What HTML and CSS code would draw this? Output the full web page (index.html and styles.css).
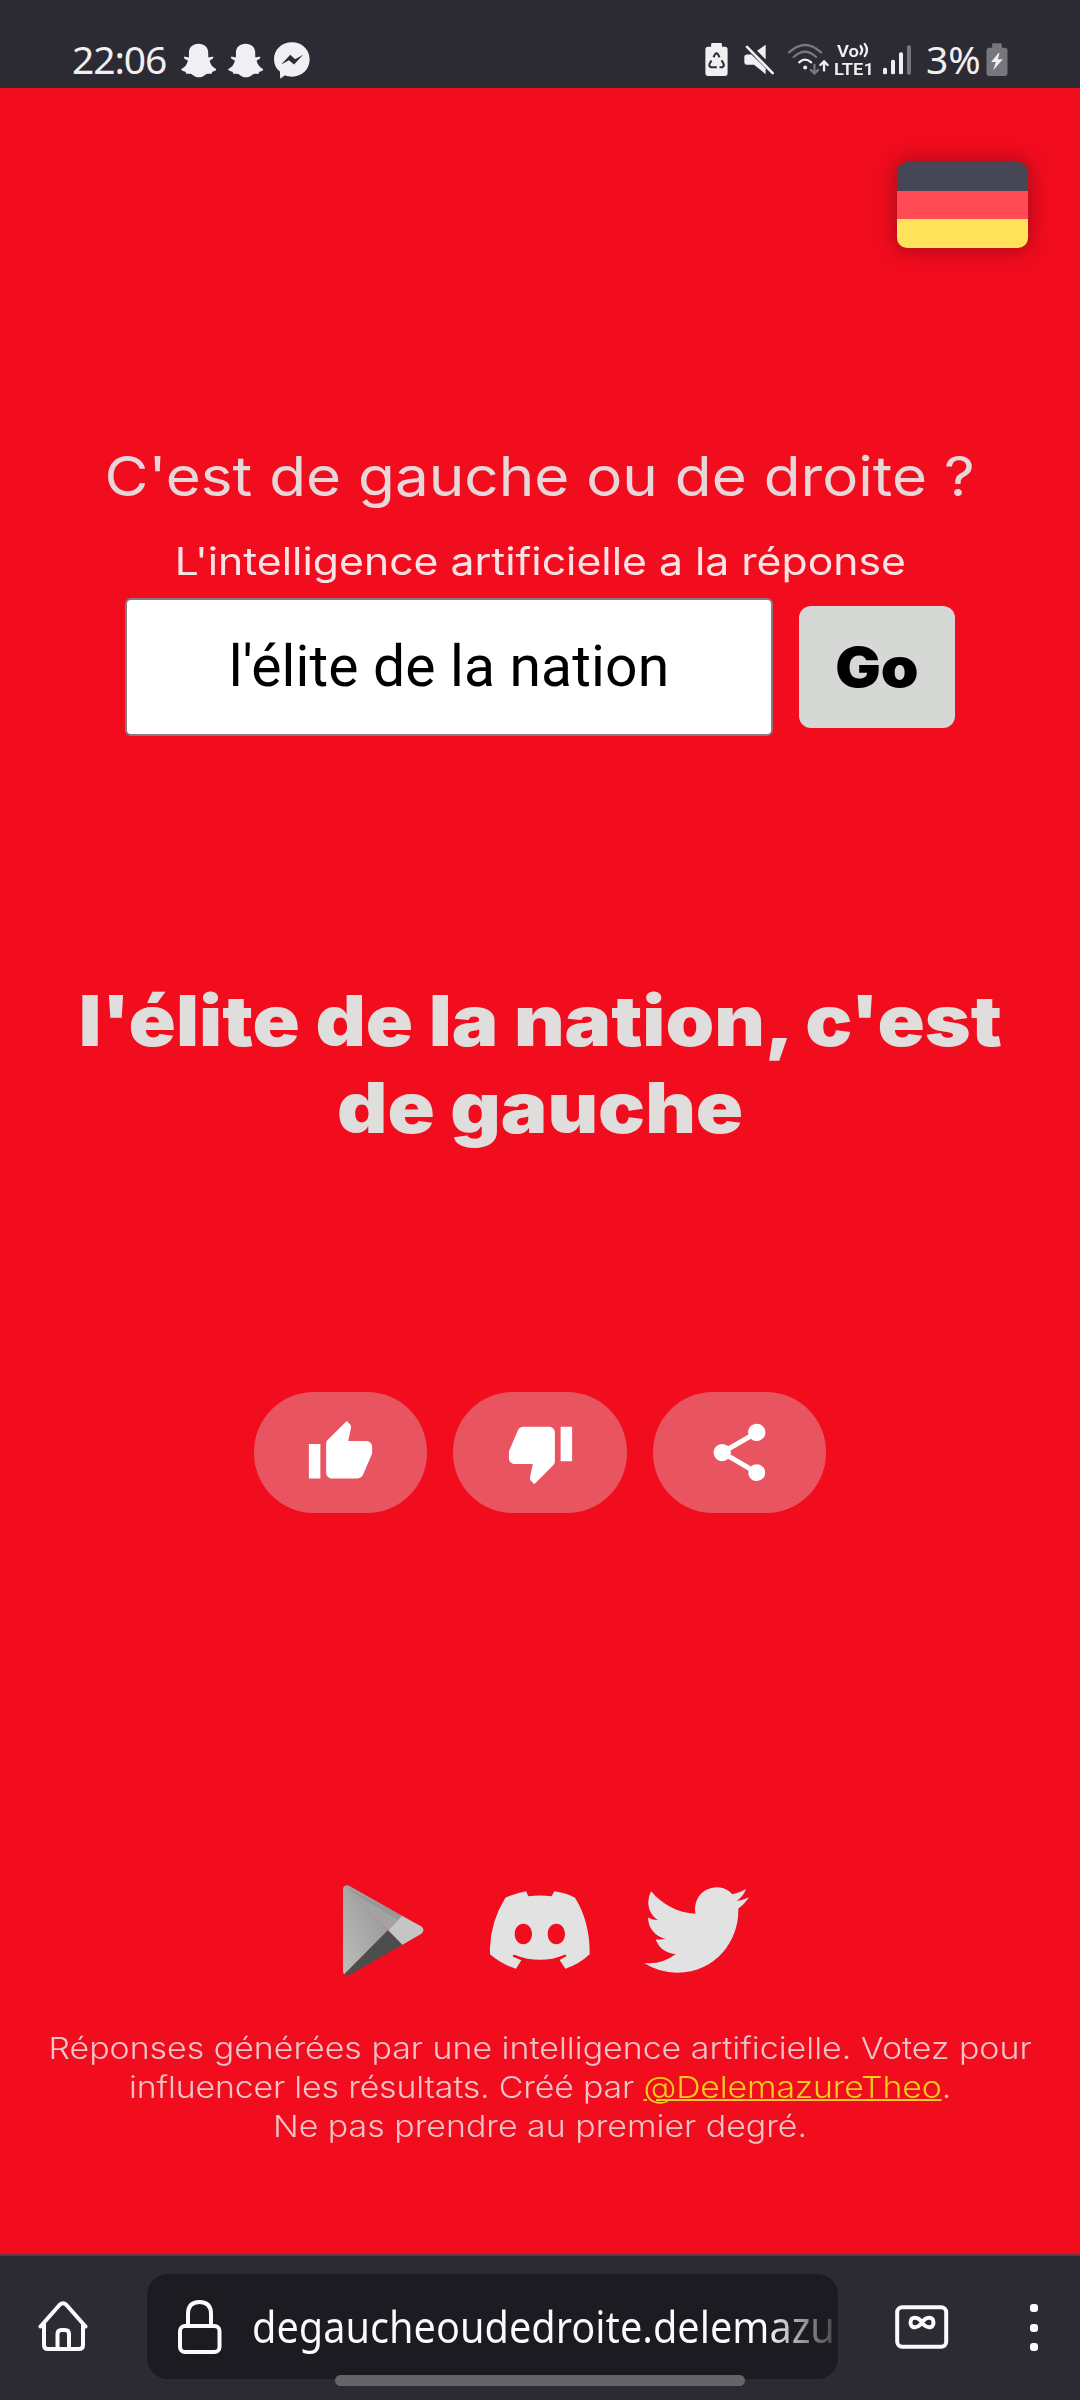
FILE: index.html
```html
<!DOCTYPE html>
<html lang="fr">
<head>
<meta charset="utf-8">
<title>C'est de gauche ou de droite ?</title>
<link rel="stylesheet" href="styles.css">
</head>
<body>
<svg class="defs" aria-hidden="true">
  <symbol id="ghost" viewBox="525 130 103 106" preserveAspectRatio="none">
    <path d="M576 132c-17 0-28 11-28 27v14c-5 1-11-3-14-1-3 3 3 8 11 11-2 12-9 21-19 26-2 3 3 6 12 8l3 7c7-1 13-1 18 3 6 4 11 7 18 7s12-3 18-7c5-4 11-4 18-3l3-7c8-2 13-5 11-8-10-5-17-14-19-26 8-3 13-8 10-11-3-2-8 2-14 1v-14c0-16-11-27-28-27z"/>
  </symbol>
</svg>
<header class="status">
  <div class="status-left">
    <span class="clock">22:06</span>
    <svg class="ghost"><use href="#ghost"/></svg>
    <svg class="ghost"><use href="#ghost"/></svg>
    <svg class="messenger" viewBox="796 128 104 110" preserveAspectRatio="none"><path fill-rule="evenodd" d="M848 129c29 0 51 22 51 51s-22 51-51 51c-8 0-14-1-20-4l-14 10-1-21c-11-9-17-22-17-37 0-28 22-50 52-50zM817 195l26-29 14 13 23-13-26 29-15-13z"/></svg>
  </div>
  <div class="status-right">
    <svg class="saver" viewBox="77 130 68 98"><path d="M98 130h26q3 0 3 4v7h9q8 0 8 8v71q0 8-8 8H86q-8 0-8-8v-71q0-8 8-8h9v-7q0-4 3-4z"/><path class="ink" d="M102 172l5-9q4-5 8 0l5 9M126 181l6 11q3 7-4 10h-8M112 202H96q-8-2-6-9l6-11M103 202h-8"/></svg>
    <svg class="mute" viewBox="194 132 90 92"><path d="M259 134v44l-26-26zM196 166l6-3h14l43 42v17l-35-28h-22q-6 0-7-7v-16q0-4 1-6z"/><path d="M203 140l77 79" fill="none" stroke="#f0f0f2" stroke-width="8" stroke-linecap="round"/></svg>
    <svg class="wifi" viewBox="326 130 124 96" fill="none" stroke-width="7" stroke-linecap="round"><path class="dim" d="M329 158q49-45 97 0M343 172q35-32 68 0M406 196v26m-11-11l11 11 11-11"/><path class="lit" d="M360 188q17-16 36 0M435 213v-27m-11 10l11-11 11 11"/><circle cx="378" cy="204" r="6" fill="#f0f0f2"/></svg>
    <div class="lte"><span>Vo<svg viewBox="0 0 11 16" width="11" height="16"><path d="M1 4q3 4 0 8M5 2q4 6 0 12" fill="none" stroke="#f0f0f2" stroke-width="2.200" stroke-linecap="round"/></svg></span><span>LTE1</span></div>
    <svg class="signal" viewBox="609 134 84 90"><rect x="609" y="202" width="12" height="20" rx="5"/><rect x="633" y="178" width="12" height="44" rx="5"/><rect x="657" y="156" width="12" height="66" rx="5"/><rect class="dimfill" x="681" y="135" width="12" height="88" rx="5"/></svg>
    <span class="percent">3%</span>
    <svg class="battery" viewBox="920 129 65 99"><path class="dimfill" d="M939 130h24q4 0 4 4v9h9q8 0 8 8v69q0 8-8 8h-47q-8 0-8-8v-69q0-8 8-8h9v-9q0-4 1-4z"/><path d="M957 159l-22 27h14l-8 25 29-33h-15l5-19z"/></svg>
  </div>
</header>

<main class="page">
  <a class="flag" aria-label="Deutsch"><i class="black"></i><i class="red"></i><i class="gold"></i></a>
  <h1 class="title">C'est de gauche ou de droite ?</h1>
  <p class="subtitle">L'intelligence artificielle a la réponse</p>
  <form class="ask">
    <div class="field">l'élite de la nation</div>
    <button class="go" type="button"><span>Go</span></button>
  </form>
  <p class="result">l'élite de la nation, c'est<br>de gauche</p>
  <div class="actions">
    <button type="button" aria-label="Pour"><svg viewBox="0 0 24 24"><path d="M1 21h4V9H1v12zm22-11c0-1.100-.9-2-2-2h-6.310l.95-4.570.03-.32c0-.41-.17-.79-.44-1.060L14.170 1 7.590 7.590C7.220 7.950 7 8.450 7 9v10c0 1.100.9 2 2 2h9c.83 0 1.540-.5 1.840-1.220l3.020-7.050c.09-.23.14-.47.14-.73v-2z"/></svg></button>
    <button type="button" aria-label="Contre"><svg viewBox="0 0 24 24"><path d="M15 3H6c-.83 0-1.540.5-1.840 1.220l-3.020 7.050c-.09.23-.14.47-.14.73v2c0 1.100.9 2 2 2h6.310l-.95 4.570-.03.32c0 .41.17.79.44 1.060L9.830 23l6.590-6.590c.36-.36.58-.86.58-1.410V5c0-1.100-.9-2-2-2zm4 0v12h4V3h-4z"/></svg></button>
    <button type="button" aria-label="Partager"><svg viewBox="0 0 24 24"><path d="M18 16.080c-.76 0-1.440.3-1.960.77L8.910 12.700c.05-.23.09-.46.09-.7s-.04-.47-.09-.7l7.050-4.110c.54.5 1.250.81 2.040.81 1.660 0 3-1.340 3-3s-1.340-3-3-3-3 1.340-3 3c0 .24.04.47.09.7L8.040 9.810C7.500 9.310 6.790 9 6 9c-1.660 0-3 1.340-3 3s1.340 3 3 3c.79 0 1.500-.31 2.040-.81l7.120 4.160c-.05.21-.08.43-.08.65 0 1.610 1.310 2.920 2.920 2.920s2.920-1.310 2.920-2.920-1.310-2.920-2.920-2.920z"/></svg></button>
  </div>
  <div class="social">
    <svg class="play" viewBox="100 76 243 273">
      <defs><linearGradient id="pg" x1="1" y1="0" x2="0" y2="1"><stop offset="0" stop-color="#929292"/><stop offset="1" stop-color="#bdbdbd"/></linearGradient></defs>
      <path fill="url(#pg)" d="M106 79L235 212 104 344q-4-3-4-9V88q0-7 6-9z"/>
      <path fill="#a3a3a3" d="M104 80q7-6 17 0l156 88-42 44z"/>
      <path fill="#979797" d="M104 80l173 88-13 13q-80-46-160-101z"/>
      <path fill="#c5c5c5" d="M277 168l57 32q15 11 0 23l-57 33-42-44z"/>
      <path fill="#4d4d4d" d="M235 212l43 43-157 90q-10 5-17-1z"/>
    </svg>
    <svg class="discord" viewBox="540 94 300 234"><path fill-rule="evenodd" d="M648 95l7 15q35-5 70 0l8-15q32 4 62 19 45 72 44 170-33 31-73 43l-17-26 20-11q-1-6-5-5-73 31-151 0-6 0-4 6l25 11-16 25q-42-12-78-43-3-90 46-170 29-13 62-19zM640 192c-15 0-26 14-26 31s11 31 26 31 26-14 26-31-11-31-26-31zm99 0c-15 0-26 14-26 31s11 31 26 31 26-14 26-31-11-31-26-31z"/></svg>
    <svg class="twitter" viewBox="0 2.200 24 19.600"><path d="M23.953 4.570a10 10 0 01-2.825.775 4.958 4.958 0 002.163-2.723c-.951.555-2.005.959-3.127 1.184a4.920 4.920 0 00-8.384 4.482C7.690 8.095 4.067 6.130 1.640 3.162a4.822 4.822 0 00-.666 2.475c0 1.710.87 3.213 2.188 4.096a4.904 4.904 0 01-2.228-.616v.06a4.923 4.923 0 003.946 4.827 4.996 4.996 0 01-2.212.085 4.936 4.936 0 004.604 3.417 9.867 9.867 0 01-6.102 2.105c-.39 0-.779-.023-1.170-.067a13.995 13.995 0 007.557 2.209c9.053 0 13.998-7.496 13.998-13.985 0-.21 0-.42-.015-.63A9.935 9.935 0 0024 4.590z"/></svg>
  </div>
  <footer class="note">Réponses générées par une intelligence artificielle. Votez pour<br><span class="credit">influencer les résultats. Créé par <a href="#">@DelemazureTheo</a>.</span><br>Ne pas prendre au premier degré.</footer>
</main>

<nav class="toolbar">
  <svg class="home" viewBox="0 0 50 50"><path d="M2.500 25.500L21.500 4q3.500-3.500 7 0L47.500 25.500M6 23v21q0 4 4 4h31q4 0 4-4V23M19.500 48V33q0-4 4-4h3.500q4 0 4 4v15"/></svg>
  <div class="url">
    <svg class="lock" viewBox="0 0 44 54"><rect x="2" y="26" width="39.500" height="26" rx="5"/><path d="M10 26V14q0-12 11.500-12T33 14v12"/></svg>
    <span class="address">degaucheoudedroite.delemazu</span>
  </div>
  <svg class="tabs" viewBox="0 0 54 44"><rect x="2.200" y="2.200" width="49" height="39.500" rx="5"/><path d="M27 17.500c-3.500-5.500-11.500-7-11.500 0s8 5.500 11.500 0 11.500-7 11.500 0-8 5.500-11.500 0z"/></svg>
  <div class="menu"><i></i><i></i><i></i></div>
  <div class="handle"></div>
</nav>
</body>
</html>
```
FILE: styles.css
```css
* { box-sizing: border-box; }
body {
  margin: 0;
  width: 1080px;
  height: 2400px;
  display: flex;
  flex-direction: column;
  background: #f10c1e;
  font-family: Inter, "Noto Sans", sans-serif;
  overflow: hidden;
}
.defs { display: none; }
h1, p { margin: 0; }
button { border: 0; padding: 0; font: inherit; }
svg { display: block; flex: none; fill: #f0f0f2; }

.status {
  height: 88px;
  background: #2c2a33;
  display: flex;
  justify-content: space-between;
  padding: 0 72px 0 72px;
  color: #f0f0f2;
  font-family: "Noto Sans", sans-serif;
}
.status-left, .status-right { display: flex; align-items: flex-start; }
.clock, .percent { font-size: 39px; line-height: 54px; margin-top: 32px; white-space: nowrap; }
.clock { width: 109px; letter-spacing: -1.1px; }
.ghost { width: 35.500px; height: 35px; margin: 43px 11px 0 0; }
.messenger { width: 36px; height: 37px; margin-top: 42px; }
.saver { width: 23px; height: 33px; margin-top: 43px; }
.saver .ink { fill: none; stroke: #2c2a33; stroke-width: 6; }
.mute { width: 30px; height: 31px; margin: 44px 0 0 16px; }
.wifi { width: 41px; height: 32px; margin: 43px 0 0 14px; }
.wifi path { fill: none; }
.dim { stroke: #77767c; }
.lit { stroke: #f0f0f2; }
.dimfill { fill: #77767c; }
.lte {
  width: 40px;
  margin: 42px 0 0 5px;
  display: flex;
  flex-direction: column;
  align-items: center;
  font: 600 17px/18px Roboto, sans-serif;
  transform: scaleX(1.080);
}
.lte span { display: flex; }
.signal { width: 28px; height: 30px; margin: 45px 0 0 9px; }
.percent { width: 60px; margin-left: 15px; letter-spacing: 0; }
.battery { width: 22px; height: 33px; margin-top: 43px; }

.page { height: 2166px; display: flex; flex-direction: column; align-items: center; }
.flag {
  align-self: flex-end;
  width: 131px;
  height: 86px;
  margin: 74px 52px 0 0;
  display: flex;
  flex-direction: column;
  border-radius: 10px;
  overflow: hidden;
  box-shadow: 0 0 20px rgba(60, 10, 20, .5);
}
.flag i { flex: 1; }
.black { background: #474655; }
.red { background: #ff4b55; }
.gold { background: #ffe15a; }

.title { margin-top: 193px; font-size: 55px; line-height: 70px; font-weight: 370; color: #e9d6d8; white-space: nowrap; transform: scaleX(1.094); }
.subtitle { margin-top: 25px; font-size: 38px; line-height: 50px; font-weight: 400; color: #fbe2e4; white-space: nowrap; transform: scaleX(1.124); }
.ask { margin-top: 12px; display: flex; align-items: center; gap: 26px; }
.field {
  width: 648px;
  height: 138px;
  border: 2px solid #8a7a80;
  border-radius: 6px;
  background: #fff;
  display: flex;
  align-items: center;
  justify-content: center;
  font: 57px/70px Roboto, sans-serif;
  letter-spacing: .15px;
  color: #000;
}
.go { width: 156px; height: 122px; border-radius: 12px; background: #d5d8d4; color: #000; font-size: 55px; font-weight: 900; }
.go span { display: inline-block; transform: scaleX(1.1); }
.result { margin-top: 241px; font-size: 70px; line-height: 87px; font-weight: 900; color: #e0dddd; text-align: center; white-space: nowrap; transform: scaleX(1.115); }
.actions { margin-top: 241px; display: flex; gap: 26px; }
.actions button { width: 173.500px; height: 121px; border-radius: 60px; background: #e95461; display: flex; align-items: center; justify-content: center; }
.actions svg { width: 69px; height: 69px; fill: #fff; }
.social { width: 406px; height: 92px; margin: 372px 0 0 12px; display: flex; align-items: flex-start; }
.social svg { fill: #e2e2e2; }
.play { width: 81px; height: 91px; }
.discord { width: 100px; height: 78px; margin: 6px 0 0 66px; }
.twitter { width: 105px; height: 86px; margin: 2px 0 0 54px; }
.note { margin-top: 52px; font-size: 30px; line-height: 39px; font-weight: 360; color: #efc4c8; text-align: center; white-space: nowrap; transform: scaleX(1.130); }
.note a { color: #efcd1c; text-decoration-thickness: 2px; }
.credit { letter-spacing: -.16px; }

.toolbar { position: relative; height: 146px; border-top: 2px solid #6b3440; background: #2c2a33; display: flex; align-items: flex-start; }
.home { width: 50px; height: 50px; margin: 45px 0 0 38px; fill: none; stroke: #fbfbfe; stroke-width: 4; stroke-linecap: round; stroke-linejoin: round; }
.url { flex: none; width: 691px; height: 105px; margin: 18px 0 0 59px; border-radius: 21px; background: #1c1b22; display: flex; align-items: center; padding-left: 31px; }
.lock { width: 44px; height: 54px; fill: none; stroke: #fbfbfe; stroke-width: 4; }
.address {
  margin-left: 30px;
  white-space: nowrap;
  font: 43px/60px "Noto Sans", sans-serif;
  color: transparent;
  background: linear-gradient(90deg, #fbfbfe 88%, #45444a 100%);
  background-clip: text;
  -webkit-background-clip: text;
  transform: scaleX(.923);
  transform-origin: 0 50%;
}
.tabs { width: 54px; height: 44px; margin: 49px 0 0 57px; fill: none; stroke: #fbfbfe; stroke-width: 4; }
.menu { margin: 48px 0 0 81px; width: 8px; display: flex; flex-direction: column; gap: 11.500px; }
.menu i { height: 8px; border-radius: 3px; background: #fbfbfe; }
.handle { position: absolute; left: 335px; top: 119px; width: 410px; height: 11px; border-radius: 6px; background: #646367; }
```
